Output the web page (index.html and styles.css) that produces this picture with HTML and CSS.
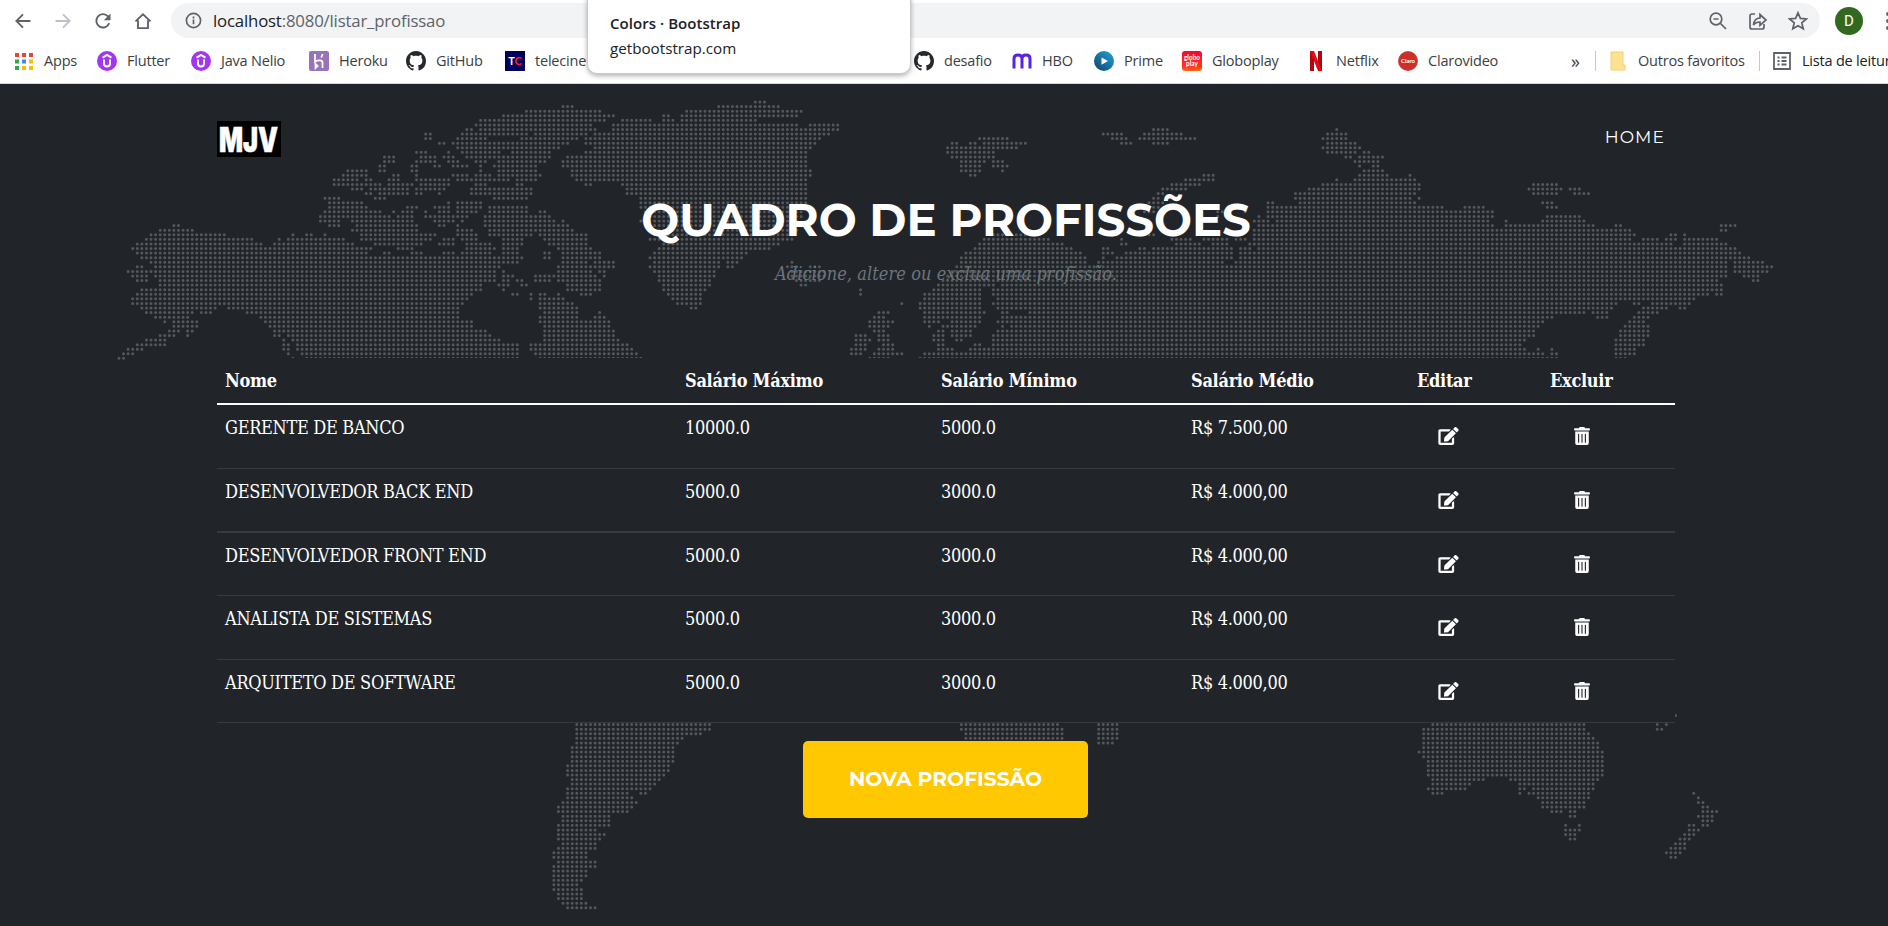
FILE: index.html
```html
<!DOCTYPE html>
<html lang="pt-br">
<head>
<meta charset="utf-8">
<title>Quadro de Profissões</title>
<link rel="stylesheet" href="styles.css">
</head>
<body>
<svg class="defs" width="0" height="0">
  <symbol id="github" viewBox="0 0 16 16"><path fill="#24292f" d="M8 0C3.58 0 0 3.58 0 8c0 3.54 2.29 6.53 5.47 7.59.4.07.55-.17.55-.38 0-.19-.01-.82-.01-1.49-2.01.37-2.53-.49-2.69-.94-.09-.23-.48-.94-.82-1.13-.28-.15-.68-.52-.01-.53.63-.01 1.08.58 1.23.82.72 1.21 1.87.87 2.33.66.07-.52.28-.87.51-1.07-1.78-.2-3.64-.89-3.64-3.95 0-.87.31-1.59.82-2.15-.08-.2-.36-1.02.08-2.12 0 0 .67-.21 2.2.82.64-.18 1.32-.27 2-.27s1.36.09 2 .27c1.53-1.04 2.2-.82 2.2-.82.44 1.1.16 1.92.08 2.12.51.56.82 1.27.82 2.15 0 3.07-1.87 3.75-3.65 3.95.29.25.54.73.54 1.48 0 1.07-.01 1.93-.01 2.2 0 .21.15.46.55.38A8.01 8.01 0 0 0 16 8c0-4.42-3.58-8-8-8z"/></symbol>
  <symbol id="udemy" viewBox="0 0 20 20"><circle cx="10" cy="10" r="10" fill="#a435f0"/><path d="M5.600 6.600 10 4l4.400 2.600M7 8.500v4a3 3 0 0 0 6 0v-4" fill="none" stroke="#fff" stroke-width="2"/></symbol>
  <symbol id="edit" viewBox="0 0 576 512"><path d="M402.600 83.200l90.200 90.200c3.800 3.800 3.800 10 0 13.800L274.400 405.600l-92.800 10.300c-12.400 1.400-22.900-9.100-21.500-21.500l10.300-92.800L388.800 83.200c3.800-3.800 10-3.800 13.800 0zm162-22.900l-48.800-48.800c-15.200-15.200-39.900-15.200-55.200 0l-35.400 35.400c-3.800 3.800-3.800 10 0 13.800l90.200 90.200c3.800 3.800 10 3.800 13.800 0l35.400-35.400c15.200-15.300 15.200-40 0-55.200zM384 346.200V448H64V128h229.800c3.200 0 6.200-1.300 8.500-3.500l40-40c7.600-7.600 2.200-20.500-8.500-20.500H48C21.500 64 0 85.500 0 112v352c0 26.500 21.500 48 48 48h352c26.500 0 48-21.500 48-48V306.200c0-10.700-12.900-16-20.500-8.500l-40 40c-2.200 2.300-3.500 5.300-3.500 8.500z"/></symbol>
  <symbol id="trash" viewBox="0 0 448 512"><path d="M32 464a48 48 0 0 0 48 48h288a48 48 0 0 0 48-48V128H32zm272-256a16 16 0 0 1 32 0v224a16 16 0 0 1-32 0zm-96 0a16 16 0 0 1 32 0v224a16 16 0 0 1-32 0zm-96 0a16 16 0 0 1 32 0v224a16 16 0 0 1-32 0zM432 32H312l-9.400-18.700A24 24 0 0 0 281.100 0H166.800a23.700 23.700 0 0 0-21.400 13.300L136 32H16A16 16 0 0 0 0 48v32a16 16 0 0 0 16 16h416a16 16 0 0 0 16-16V48a16 16 0 0 0-16-16z"/></symbol>
</svg>

<header class="browser">
  <div class="toolbar">
    <svg class="nav-icon" viewBox="0 0 24 24"><path d="M21 12H4.500M12 4l-8 8 8 8"/></svg>
    <svg class="nav-icon nav-off" viewBox="0 0 24 24"><path d="M3 12h16.500M12 4l8 8-8 8"/></svg>
    <svg class="nav-icon" viewBox="0 0 24 24"><path d="M19.500 14.500A8 8 0 1 1 18 6.500l1.500 2"/><path class="solid" d="M21 3v8h-8z"/></svg>
    <svg class="nav-icon" viewBox="0 0 24 24"><path d="M3 12.500 12 4l9 8.500M6 11v9.500h12V11"/></svg>
    <div class="omnibox">
      <svg class="info" viewBox="0 0 18 18"><circle cx="9" cy="9" r="7.500"/><path d="M9 8v5M9 4.800v2"/></svg>
      <span class="url"><b>localhost</b>:8080/listar_profissao</span>
      <svg class="box-icon" viewBox="0 0 20 20"><circle cx="8" cy="8" r="5.800"/><path d="M12.500 12.500 18 18M5.500 8h5"/></svg>
      <svg class="box-icon" viewBox="0 0 20 20"><path d="M7 3H4a2 2 0 0 0-2 2v11a2 2 0 0 0 2 2h10a2 2 0 0 0 2-2v-3M5.500 14c.5-5 3-7 6.500-7V3.500l6 5.500-6 5.300V11c-3 0-5 .8-6.500 3z"/></svg>
      <svg class="box-icon" viewBox="0 0 20 20"><path d="M10 1.800l2.400 5.600 6 .5-4.600 4 1.400 5.900-5.200-3.100-5.200 3.100 1.400-5.900-4.600-4 6-.5z"/></svg>
    </div>
    <span class="avatar">D</span>
    <span class="menu"><i></i><i></i><i></i></span>
  </div>
  <nav class="bookmarks">
    <a class="bm"><svg viewBox="0 0 20 20"><path fill="#ea4335" d="M1 2h4v4H1zM8 2h4v4H8zM15 2h4v4h-4z"/><path fill="#34a853" d="M1 8.500h4v4H1zM1 15h4v4H1z"/><path fill="#4285f4" d="M8 8.500h4v4H8z"/><path fill="#fbbc04" d="M15 8.500h4v4h-4zM8 15h4v4H8zM15 15h4v4h-4z"/></svg>Apps</a>
    <a class="bm"><svg><use href="#udemy"/></svg>Flutter</a>
    <a class="bm"><svg><use href="#udemy"/></svg>Java Nelio</a>
    <a class="bm"><svg viewBox="0 0 20 20"><rect width="20" height="20" rx="2" fill="#9873b9"/><path d="M6 3v7.500c3-1.500 7.500-2 7.500 1V17M13.500 3c0 1.500-.5 2.500-1.500 3.500M6.500 13v4l2-2z" fill="none" stroke="#fff" stroke-width="1.800"/></svg>Heroku</a>
    <a class="bm"><svg><use href="#github"/></svg>GitHub</a>
    <a class="bm"><span class="fav fav-tc">T<em>C</em></span>telecine</a>
    <a class="bm"><svg><use href="#github"/></svg>desafio</a>
    <a class="bm"><svg viewBox="0 0 20 20"><path d="M2 17.500V7.500Q2 4 6 4t4 3.500v10M10 7.500Q10 4 14 4t4 3.500v10" fill="none" stroke="#5822e8" stroke-width="3"/></svg>HBO</a>
    <a class="bm"><svg viewBox="0 0 20 20"><defs><linearGradient id="pv" x1="0" y1="1" x2="1" y2="0"><stop stop-color="#0d3f70"/><stop offset="1" stop-color="#22a8d8"/></linearGradient></defs><circle cx="10" cy="10" r="10" fill="url(#pv)"/><path d="M7.500 6.500 14 10l-6.500 3.700z" fill="#fff"/></svg>Prime</a>
    <a class="bm"><span class="fav fav-globo">globo<br>play</span>Globoplay</a>
    <a class="bm netflix"><svg viewBox="0 0 20 20"><path fill="#b1060f" d="M4 0h4v20H4zM12 0h4v20h-4z"/><path fill="#e50914" d="M4 0h4l8 20h-4z"/></svg>Netflix</a>
    <a class="bm"><span class="fav fav-claro">Claro</span>Clarovideo</a>
    <a class="more">»</a>
    <a class="bm split"><svg viewBox="0 0 20 20"><path fill="#fde293" stroke="#f4d06a" d="M3 1h12v13h2v5H3z"/></svg>Outros favoritos</a>
    <a class="bm split reading"><svg viewBox="0 0 20 20"><path d="M2 2h16v16H2zM5.500 6.500h2M5.500 10h2M5.500 13.500h2M9.500 6.500h5M9.500 10h5M9.500 13.500h5" fill="none" stroke="#5f6368" stroke-width="1.800"/></svg>Lista de leitura</a>
  </nav>
  <div class="tab-card"><strong>Colors · Bootstrap</strong><span>getbootstrap.com</span></div>
</header>

<main class="page">
  <svg class="world" width="1888" height="842" viewBox="0 84 1888 842"><path id="dots"/></svg>
  <div class="container">
    <div class="navbar">
      <svg class="logo" viewBox="0 0 64 36"><rect width="64" height="36"/><text x="2" y="30.500" textLength="59" lengthAdjust="spacingAndGlyphs">MJV</text></svg>
      <a class="home">HOME</a>
    </div>
    <h2 class="title"><span>QUADRO DE PROFISSÕES</span></h2>
    <h3 class="subtitle"><span>Adicione, altere ou exclua uma profissão.</span></h3>
    <table class="jobs">
      <colgroup><col class="c-name"><col class="c-max"><col class="c-min"><col class="c-avg"><col class="c-edit"><col class="c-del"></colgroup>
      <thead><tr><th>Nome</th><th>Salário Máximo</th><th>Salário Mínimo</th><th>Salário Médio</th><th>Editar</th><th>Excluir</th></tr></thead>
      <tbody>
        <tr><td>GERENTE DE BANCO</td><td>10000.0</td><td>5000.0</td><td>R$ 7.500,00</td><td><svg class="edit"><use href="#edit"/></svg></td><td><svg class="trash"><use href="#trash"/></svg></td></tr>
        <tr><td>DESENVOLVEDOR BACK END</td><td>5000.0</td><td>3000.0</td><td>R$ 4.000,00</td><td><svg class="edit"><use href="#edit"/></svg></td><td><svg class="trash"><use href="#trash"/></svg></td></tr>
        <tr class="short"><td>DESENVOLVEDOR FRONT END</td><td>5000.0</td><td>3000.0</td><td>R$ 4.000,00</td><td><svg class="edit"><use href="#edit"/></svg></td><td><svg class="trash"><use href="#trash"/></svg></td></tr>
        <tr><td>ANALISTA DE SISTEMAS</td><td>5000.0</td><td>3000.0</td><td>R$ 4.000,00</td><td><svg class="edit"><use href="#edit"/></svg></td><td><svg class="trash"><use href="#trash"/></svg></td></tr>
        <tr class="short"><td>ARQUITETO DE SOFTWARE</td><td>5000.0</td><td>3000.0</td><td>R$ 4.000,00</td><td><svg class="edit"><use href="#edit"/></svg></td><td><svg class="trash"><use href="#trash"/></svg></td></tr>
      </tbody>
    </table>
    <a class="cta">NOVA PROFISSÃO</a>
  </div>
</main>
<script src="map.js"></script>
</body>
</html>
```

FILE: styles.css
```css
* { box-sizing: border-box; }
body { margin: 0; width: 1888px; height: 926px; overflow: hidden; background: #212529; color: #fff; }
.defs { position: absolute; }

/* Browser bar */
.browser { position: relative; height: 84px; background: #fff; border-bottom: 1px solid #d5d7da; color: #3c4043; font-family: "Open Sans", "Noto Sans", sans-serif; overflow: visible; z-index: 2; }
.toolbar { display: flex; align-items: center; height: 41px; padding-left: 13px; }
.nav-icon { flex: none; width: 20px; height: 20px; margin-right: 20px; fill: none; stroke: #5f6368; stroke-width: 2.200; }
.nav-icon .solid { fill: #5f6368; stroke: none; }
.nav-off { stroke: #bdc1c6; }
.omnibox { display: flex; align-items: center; flex: none; width: 1649px; height: 35px; margin-left: -2px; padding: 0 12px 0 14px; border-radius: 18px; background: #f1f3f4; }
.info { width: 17px; height: 17px; fill: none; stroke: #5f6368; stroke-width: 1.800; }
.url { flex: 1; margin-left: 11px; font-size: 16.800px; letter-spacing: -0.180px; color: #5f6368; white-space: nowrap; }
.url b { font-weight: 400; color: #202124; }
.box-icon { width: 20px; height: 20px; margin-left: 20px; fill: none; stroke: #5f6368; stroke-width: 1.700; }
.avatar { flex: none; width: 28px; height: 28px; margin-left: 15px; border-radius: 50%; background: #33691e; color: #fff; font: 15px/28px Roboto, sans-serif; text-align: center; }
.menu { display: grid; gap: 3px; margin-left: 23px; }
.menu i { width: 4px; height: 4px; border-radius: 2px; background: #5f6368; }
.bookmarks { display: grid; grid-template-columns: 83px 94px 118px 97px 99px 409px 98px 82px 88px 124px 92px 173px 24px 164px 200px; height: 39px; padding-left: 14px; align-items: center; font-size: 14.500px; letter-spacing: -0.200px; }
.bm { display: flex; align-items: center; gap: 10px; white-space: nowrap; }
.bm svg { flex: none; width: 20px; height: 20px; }
.split { border-left: 1px solid #c4c7cb; padding-left: 12px; height: 20px; }
.reading { color: #202124; }
.more { font-size: 18px; }
.fav { width: 20px; height: 20px; flex: none; color: #fff; text-align: center; letter-spacing: 0; }
.fav-tc { background: #00005a; font: bold 11px/20px Lato, sans-serif; }
.fav-tc em { color: #ff1744; font-style: normal; }
.fav-globo { border-radius: 3px; background: linear-gradient(#fb0234, #ff3b1e 80%, #ff6a13); font: bold 6.500px/6px Lato, sans-serif; padding-top: 4px; }
.fav-claro { border-radius: 50%; background: radial-gradient(#d52b1e, #c9302c 60%, #ef8079); font: bold 6px/20px Lato, sans-serif; }
.tab-card { position: absolute; left: 587px; top: -10px; width: 324px; height: 84px; padding: 20px 22px 0; border: 1px solid #c8cacc; border-radius: 10px; background: #fff; box-shadow: 0 2px 5px rgba(0,0,0,.3); color: #202124; font-size: 15.200px; line-height: 25px; letter-spacing: 0; }
.tab-card strong, .tab-card span { display: block; }
.tab-card strong { font-weight: 600; font-size: 15px; letter-spacing: 0.050px; }

/* Page */
.page { position: relative; height: 842px; }
.world { position: absolute; inset: 0; }
.world path { fill: none; stroke: #54585b; stroke-width: 3; stroke-linecap: round; }
.container { position: relative; width: 1458px; margin-left: 217px; padding-top: 37px; display: flex; flex-direction: column; font-family: "Roboto Slab", "DejaVu Serif Condensed", "DejaVu Serif", serif; }
.navbar { display: flex; justify-content: space-between; align-items: flex-start; height: 36px; }
.logo { width: 64px; height: 36px; }
.logo text { font: 900 34px Inter, sans-serif; fill: #fff; stroke: #fff; stroke-width: .6px; }
.home { margin-right: 10px; font: 400 17.100px/32px Montserrat, Inter, sans-serif; letter-spacing: 1.060px; }
.title { margin: 34px 0 0; height: 56px; text-align: center; font: 700 45px/57px Montserrat, Inter, sans-serif; white-space: nowrap; }
.subtitle { margin: 15px 0 0; height: 69px; text-align: center; font-size: 18px; line-height: 24px; letter-spacing: 0.080px; font-weight: 400; font-style: italic; color: #6c757d; }
.jobs { width: 1458px; margin-top: 27px; table-layout: fixed; border-collapse: separate; border-spacing: 0; background: #212529; font-size: 18px; letter-spacing: -0.300px; line-height: 28px; }
.c-name { width: 459px; }
.c-max { width: 256px; }
.c-min { width: 250px; }
.c-avg { width: 226px; }
.c-edit { width: 133px; }
.c-del { width: 134px; }
.jobs th { height: 47px; padding: 9px 9px 8px; border-bottom: 2px solid #fff; text-align: left; vertical-align: top; }
.jobs td { height: 64px; padding: 9px 9px 8px; border-bottom: 1px solid #373b3e; vertical-align: top; white-space: nowrap; }
.jobs th:first-child, .jobs td:first-child { padding-left: 8px; }
.jobs .short td { height: 63px; }
.jobs tr:nth-child(2) td { border-bottom-width: 2px; }
.jobs svg { display: block; fill: #fff; height: 18px; margin-top: 13px; }
.edit { width: 21px; margin-left: 21px; }
.trash { width: 16px; margin-left: 24px; }
.cta { align-self: center; width: 285px; height: 77px; margin: 18px 1px 0 0; border-radius: 5px; background: #ffc800; text-align: center; font: 700 20.250px/76px Montserrat, Inter, sans-serif; }
```

FILE: map.js
```js
// Dotted world map. Each sheet holds rows of dot runs; runs are in sheet units
// and snap to one shared grid.
const PITCH = 4.578, X0 = 173.9, Y0 = 102;
const sheets = [
  { x: 100, scale: 2.8, first: 1, rows: `1297-1322
1194-1400
1129-1437
1065-1412 1462-1540
1052-1375 1437-1568
1027-1040 1065-1385 1437-1568
910-922 1014-1065 1078-1195 1220-1362 1385-1568
910-922 1001-1078 1180-1335 1362-1568
950-962 988-1116 1130-1310 1362-1568
1001-1116 1130-1284 1385-1568
884-912 975 1014-1116 1155-1258 1362-1568
795-822 897-936 962-988 1027-1103 1116-1258 1310-1568
795-822 884-936 975-1001 1052-1078 1116-1245 1297-1568
782-795 872-884 936-950 988-1027 1065 1103-1220 1297-1568
692-745 782-795 872-884 1065 1116-1220 1322-1568
680-745 822-835 884 988-1027 1052-1090 1116-1232 1322-1568
655-706 718 745-757 808-835 884-975 1001-1142 1168-1220 1335-1568
655-782 808-872 897-975 1052-1078 1168-1180 1362-1375 1462-1568
706-732 757-859 884-962 1040-1207 1475-1568
745-757 782-859 884-897 950 1040-1207 1475-1568
628-667 770-795 1103-1194 1514-1568
641-732 975 1001-1065 1514-1568
641-745 859-884 936-975 1001-1065 1090-1194
628-782 822 846-872 910 950-975 1001-1052 1090-1194 1232-1245
615-692 706-808 835-872 910-988 1001-1027 1078-1258
615-667 706-872 936-962 975-988 1014 1078-1271 1297
207-220 641-667 718-884 950-962 1001 1078-1310
168-258 706-884 1001-1040 1090-1322
142-348 539 577-590 628 732-936 1001-1052 1090-1207 1232-1362
130-425 500 526-680 732-922 962-988 1014-1052 1130-1180 1245-1362
104-450 487-706 770-900 950-988 1027-1065 1078-1090 1130-1180 1258-1362
91-757 835-872 1027-1103 1130-1168 1284-1375
104-745 795-808 872-897 962-988 1014-1090 1130-1168 1245-1258 1297-1400
117-1116 1130-1180 1245-1258 1297-1400
142-1116 1130-1168 1297-1362 1385-1437
104-117 155-1116 1284-1375 1385-1437
78-142 155-1103 1130 1284-1375 1400-1412
91-130 155-1103 1130-1155 1220-1271 1284-1385 1412
104-130 168-1103 1130-1142 1168-1180 1220-1258 1284-1400
168-1065 1116-1142 1180-1194 1310-1400
117-1065 1130 1310-1400
104-1040 1155-1168 1207 1232-1245 1284 1348-1375
91-1027 1207 1232-1297
91-1014 1232-1322
117-322 360-1001 1232-1335
130-258 284-310 412-1001 1245-1335 1400
155-245 450-1001 1232-1335 1385-1412
180 207-271 462-1040 1232-1425
207-230 245-271 475-1040 1245-1425
194-220 245-258 487-500 513-1078 1245-1437
168-207 245 487-500 526-1090 1245-1437
130-180 513 539-1116 1245-1450
104-180 513-526 552-1168 1207-1475
78-117 513-526 552-1168 1207-1488
65-91 526 565-1168 1220-1500
52-65 539 577-1168 1232-1514` },
  { x: 600, scale: 2.8, first: 0, rows: `433-460
332-498
240-562
178-190 228-550
65-140 178-205 228-435
36-550 588-665
36-665
0-640
0-614 1065-1140
0-600 985-998 1037-1052 1075-1190
0-588 972-1165
0-575 972-1103
0-575 985-1103
0-575 1010-1075 1103-1130
0-575 1010-1065 1103-1138
0-588 1010-1065 1128
0-588 1037-1050
0-575
65-575
75-575
75-575
115-575
115-575
115-575
130-560
130-560
115-550
130-550
140-545
150-540 1100-1230
140-540 1075-1255
178-498 1065-1295
165-475 1050-1320 1410-1420
152-410 1024-1345
140-397 1012-1358
152-330 358-384 537 1012-1270 1282-1358
140-332 358-372 525-550 588-614 1000-1400
152-320 537-628 985-1568
165-320 537-628 972-1568
165-306 545-620 960-1568
178-306 562-575 945-1100 1127-1568
178-295 728 932-1065 1103-1568
190-284 728 907-1065 1103-1568
203-284 907-1065 1115-1568
215-284 844 895-1065 1103-1568
255-268 895-1065 1115-1568
780-805 907-1075 1127-1140 1205-1568
767-793 907-960 975-1065 1127-1568
755-818 907-950 985-1065 1115-1568
755-805 920 957-1052 1127 1152-1568
767-793 945-960 985-1040 1115-1568
715-742 780-805 932-960 985-1040 1103-1568
715-755 780-805 932-960 998-1012 1103-1568
715-742 793-818 945-960 1050-1065 1103-1568
703-742 780-818 945-985 1037-1090 1103-1568
703-728 767-845 907-1568
755-805 895-1568` },
  { x: 1100, scale: 3, first: 6, rows: `158-202 709
8-66 130-245 682-738
35-80 117-285 668-738
62-93 158-202 682-765
668-780
682-765 792-805
737-750 778-848
764-835
778 819-833
792-848
309-340 778-860 929
255-340 709 764-942
213-298 668-956
185-257 627-956
172-190 586-942
158-180 586-928 956
145-185 503-517 600-902 915-942
130-175 503-1025 1093-1148
130-165 350-380 430 503-1175
350 475 503-1175
462-503 530-1162
475-1175
462-1200
117-160 460-1200
62 213-270 310-380 405-435 460-1200
62-75 227-300 337-380 445-1200
8-22 117-135 158-395 420-450 475-1200
8-38 75-395 420-1200
8 50-395 420-1200
0-370 405-1200
${'0-1200\n'.repeat(21).trim()}` },
  { x: 1450, scale: 3, first: 18, rows: `250-320
237-332 360-388
250-320 374-415

277-305
43-98 291-320
0-125
0-125 291-388
0-112 167 277-400
0-125 167-430 497-510 812-855
0-540 812-825
0-552 662-675 703
0-540 580-622 649-675 703-800
0-662 703-827
0-855
0-868
0-895
0-827 854-937
0-827 854-963
0-827 854-950
0-827 882-922
0-800 909-922
0-813
0-813
0-772 800-813
0-730
0-497 552-566 607-717
0-485 580-648 690-703
0-402 428-470 566-620
0-305 442-470 552-593
0-277 538-580
0-264 525-593
0-250 511-593
0-250 511-593
0-222 497-580
0-208 497-580
0-222 264 305 497-552
0-277 305-320 497-552
0-277 291-320 497-525` },
  { x: 520, scale: 2.45, first: 136, rows: `137-465 1080-1318 1415-1465
137-465 1080-1328 1415-1465
137-443 1090-1328 1415-1465
137-397 1090-1328 1415-1465
137-386 1415-1452
126-375
126-375
126-375
126-375
115-365
115-365
115-352
126-341
126-330
115-318
115-265 295-307
115-273
104-285
92-273
92-262
104-218
104-218
92-218
92-185
92-206
92-195
104-185
92-185
81-162
81-162
92-185
81-185
81-162
81-162
81-150
81-140
81-150
92-150
92-150
104-162
115-185` },
  { x: 1360, scale: 3, first: 134, rows: `947

217-670 889 917
189-670 889-903
189-684
189-697
189-711
189-711
176-725
189-725
203-725
203-725
203-725
203-725
217-370 450-711
217-328 478-697
203-315 478-492 519-697
217-245 478 505-684 999
532-684 1013
546-670 1013-1027
546-670 1027-1041
574-601 629-643 1027-1068
629-643 1013-1055
1027-1055
615 656 985-999 1027-1041
615-656 985-1013
615-643 972-999
629-643 958-985
945-972
931-972
917-958
931-945` }
];

const cells = new Set();
for (const s of sheets) {
  const col = v => Math.round((s.x + v / s.scale - X0) / PITCH);
  s.rows.split('\n').forEach((row, j) => {
    for (const run of row.split(' ').filter(Boolean)) {
      const [a, b = a] = run.split('-').map(Number);
      for (let i = col(a); i <= col(b); i++) cells.add(i + ',' + (s.first + j));
    }
  });
}
let d = '';
for (const c of cells) {
  const [i, k] = c.split(',').map(Number);
  d += `M${(X0 + i * PITCH).toFixed(2)} ${(Y0 + k * PITCH).toFixed(2)}h0`;
}
document.getElementById('dots').setAttribute('d', d);
```
